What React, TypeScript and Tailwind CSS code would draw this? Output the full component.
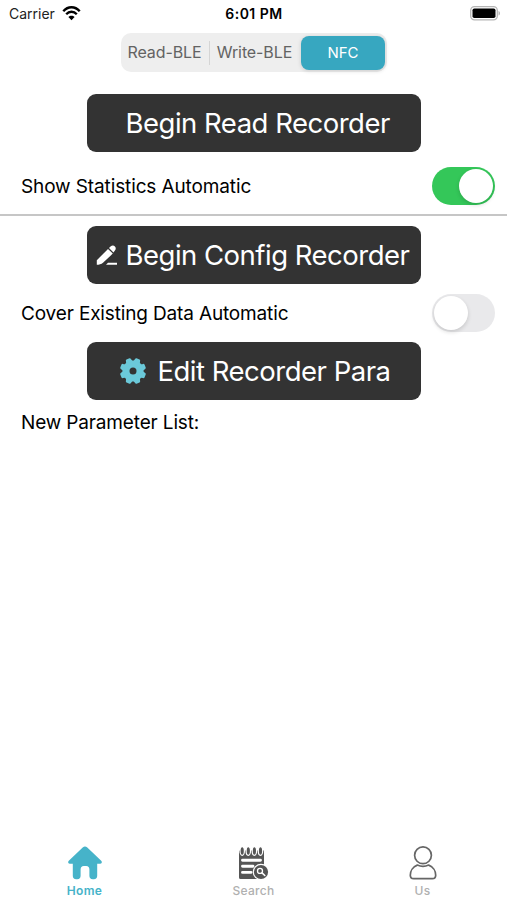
import { useState, type ReactNode } from "react"
import clsx from "clsx"

const segments = [
  { name: "Read-BLE", width: "w-[88px]" },
  { name: "Write-BLE", width: "w-[91px]" },
  { name: "NFC", width: "w-[84px]" },
]

function WifiIcon() {
  return (
    <svg width="19" height="15" viewBox="0 0 19 15" fill="none">
      <path d="M1.3 5.2C6-.1 13-.1 17.7 5.2" stroke="#000" strokeWidth="2.4" />
      <path d="M4.2 8.2c3-3.3 7.6-3.3 10.6 0" stroke="#000" strokeWidth="2.3" />
      <path d="M9.5 14.2 6.4 11c1.6-1.8 4.6-1.8 6.2 0Z" fill="#000" />
    </svg>
  )
}

function BatteryIcon() {
  return (
    <svg width="31" height="15" viewBox="0 0 31 15">
      <rect x="0.7" y="0.7" width="26.6" height="13.1" rx="3.8" fill="#fff" stroke="#b5b5b5" strokeWidth="1.3" />
      <rect x="2.5" y="2.5" width="23" height="9.5" rx="1.8" fill="#000" />
      <path d="M28.5 5v4.6c2-.7 2-3.9 0-4.6Z" fill="#b5b5b5" />
    </svg>
  )
}

function PencilIcon() {
  return (
    <svg className="shrink-0" width="22" height="22" viewBox="0 0 22 22" fill="#fff">
      <path d="M0.8 20.8v-4.6L12 5l4.800 4.600L7 18.800c-1.700 1.600-4 2-6.200 2Z" />
      <path d="m13 4 1.500-1.400c1.600-1.500 3.400-1.200 4.400-.2s1.300 2.700 0 4.100l-1.400 1.900Z" />
      <path d="M10 20.800 12 18.700h9v2.100Z" />
    </svg>
  )
}

function GearIcon() {
  return (
    <svg className="shrink-0" width="28" height="28" viewBox="0 0 28 28">
      {/* ring plus eight rounded teeth */}
      <g fill="#6bc9d9">
        {[22.5, 67.5, 112.5, 157.5, 202.5, 247.5, 292.5, 337.5].map((angle) => (
          <path key={angle} d="M8.8 7Q11 4.600 11.300 2 11.400.9 12.400.9h3.200q1 0 1.100 1.100Q17 4.600 19.200 7Z" transform={`rotate(${angle} 14 14)`} />
        ))}
        <circle cx="14" cy="14" r="10.5" />
      </g>
      <circle cx="14" cy="14" r="3.5" fill="#333" />
    </svg>
  )
}

function HomeIcon() {
  return (
    <svg width="36" height="36" viewBox="0 0 36 36" fill="#46b3c9">
      <path d="M15.700 2.400q2.300-1.800 4.600 0L34.200 15.800c1.300 1.300.6 3-1.200 3h-2.800v12a3.400 3.400 0 0 1-3.400 3.400h-1a3.400 3.400 0 0 1-3.400-3.400v-6.200q0-3.600-3.200-3.600h-2.400q-3.200 0-3.200 3.600v6.200a3.400 3.400 0 0 1-3.400 3.400h-1a3.400 3.400 0 0 1-3.400-3.400v-12H3c-1.800 0-2.500-1.700-1.200-3Z" />
    </svg>
  )
}

function SearchIcon() {
  return (
    <svg width="36" height="36" viewBox="0 0 36 36" fill="none">
      <path d="M3.500 5.500h24.500v18a7.500 7.500 0 0 0-5 10.500H4.500Q3 34 3 32.500V6Z" fill="#555" />
      <path d="M6.500 15.300h18M6.500 21.200h10.500M6.500 27.400h8.500" stroke="#fff" strokeWidth="2.9" strokeLinecap="round" />
      {[6.2, 12.3, 18.4, 24.5].map((x) => (
        <ellipse key={x} cx={x} cy="6" rx="2.200" ry="4.300" fill="#555" stroke="#fff" strokeWidth="1.2" />
      ))}
      <circle cx="25" cy="27" r="8.3" fill="#fff" />
      <circle cx="25" cy="27" r="7.1" fill="#555" />
      <circle cx="24" cy="25.900" r="2.5" stroke="#fff" strokeWidth="1.3" />
      <path d="m26 27.900 2.800 2.600" stroke="#fff" strokeWidth="1.6" strokeLinecap="round" />
    </svg>
  )
}

function UserIcon() {
  return (
    <svg width="36" height="36" viewBox="0 0 36 36" fill="none" stroke="#666" strokeWidth="1.7">
      <circle cx="18" cy="10.3" r="8.4" />
      <path d="M12.300 20.100C8 21.700 5.300 26 5.300 30.200q0 3.400 3.400 3.400h18.600q3.400 0 3.400-3.400c0-4.200-2.700-8.500-7-10.100q-5.700 2.700-11.400 0Z" strokeLinejoin="round" />
    </svg>
  )
}

const tabs = [
  { name: "Home", icon: <HomeIcon /> },
  { name: "Search", icon: <SearchIcon /> },
  { name: "Us", icon: <UserIcon /> },
]

function Toggle({ on, label, onChange }: { on: boolean; label: string; onChange: () => void }) {
  return (
    <button
      role="switch"
      aria-checked={on}
      aria-label={label}
      onClick={onChange}
      className={clsx("flex h-[38px] w-[63px] rounded-full p-[2px]", on ? "justify-end bg-[#34c759]" : "justify-start bg-[#e9e9eb]")}
    >
      <span className="size-[34px] rounded-full bg-white shadow-[0_2px_4px_rgba(0,0,0,0.15)]" />
    </button>
  )
}

function ActionButton({ icon, className, children }: { icon?: ReactNode; className: string; children: ReactNode }) {
  return (
    <button className={clsx("mx-auto flex h-[58px] w-[334px] shrink-0 items-center rounded-[9px] bg-[#333] text-[27.5px] tracking-[-0.5px] whitespace-nowrap text-white", className)}>
      {icon}
      <span className="pt-[2px]">{children}</span>
    </button>
  )
}

export default function App() {
  const [segment, setSegment] = useState("NFC")
  const [tab, setTab] = useState("Home")
  const [showStatistics, setShowStatistics] = useState(true)
  const [coverData, setCoverData] = useState(false)

  return (
    <div className="flex h-[900px] w-[507px] flex-col overflow-hidden bg-white font-['Inter',sans-serif] text-black">
      {/* Status bar */}
      <header className="grid h-[26px] shrink-0 grid-cols-3 items-center pr-[6px] pl-[9px] text-[14px]">
        <div className="flex items-center gap-[7px]">
          <span className="text-[#222]">Carrier</span>
          <WifiIcon />
        </div>
        <div className="pr-[2px] text-center font-semibold tracking-[0.5px]">6:01 PM</div>
        <div className="flex justify-end">
          <BatteryIcon />
        </div>
      </header>

      {/* Mode switch */}
      <div className="mx-auto mt-[7px] flex h-[39px] w-[266px] shrink-0 items-center rounded-[10px] bg-[#eee] pl-px">
        {segments.map((item, index) => (
          <button
            key={item.name}
            onClick={() => setSegment(item.name)}
            className={clsx(
              "flex items-center justify-center",
              item.width,
              segment === item.name ? "h-[34px] rounded-[8px] bg-[#37a7c0] pt-px pl-px text-[15px] text-white shadow-[0_1px_4px_rgba(0,0,0,0.15)]" : "h-[24px] pr-px pb-px text-[16px] tracking-[-0.1px] text-[#636363]",
              index === 0 && "border-r border-[#d5d5d5]"
            )}
          >
            {item.name}
          </button>
        ))}
      </div>

      <ActionButton className="mt-[22px] pl-[39px]">Begin Read Recorder</ActionButton>

      <div className="flex h-[64px] shrink-0 items-center justify-between border-b-2 border-[#c6c6c6] pt-[5px] pr-[12px] pl-[21px]">
        <span className="pt-[3px] text-[19px] tracking-[-0.12px]">Show Statistics Automatic</span>
        <Toggle on={showStatistics} label="Show Statistics Automatic" onChange={() => setShowStatistics(!showStatistics)} />
      </div>

      <ActionButton className="mt-[10px] gap-[8px] pl-[9px]" icon={<PencilIcon />}>
        Begin Config Recorder
      </ActionButton>

      <div className="flex h-[58px] shrink-0 items-center justify-between pr-[12px] pb-px pl-[21px]">
        <span className="pt-[3px] text-[19px] tracking-[-0.15px]">Cover Existing Data Automatic</span>
        <Toggle on={coverData} label="Cover Existing Data Automatic" onChange={() => setCoverData(!coverData)} />
      </div>

      <ActionButton className="gap-[11px] pl-[32px]" icon={<GearIcon />}>
        Edit Recorder Para
      </ActionButton>

      <main className="flex-1 px-[21px] pt-[9px]">
        <h2 className="text-[19px] tracking-[-0.15px]">New Parameter List:</h2>
      </main>

      {/* Bottom tabs */}
      <nav className="grid h-[56px] shrink-0 grid-cols-3">
        {tabs.map((item) => (
          <button
            key={item.name}
            onClick={() => setTab(item.name)}
            className={clsx("flex flex-col items-center gap-[2px] pt-[1px] text-[12px] leading-[16px] tracking-[0.3px]", tab === item.name ? "font-semibold text-[#46b3c9]" : "font-medium text-[#b0b0b0]")}
          >
            {item.icon}
            {item.name}
          </button>
        ))}
      </nav>
    </div>
  )
}
